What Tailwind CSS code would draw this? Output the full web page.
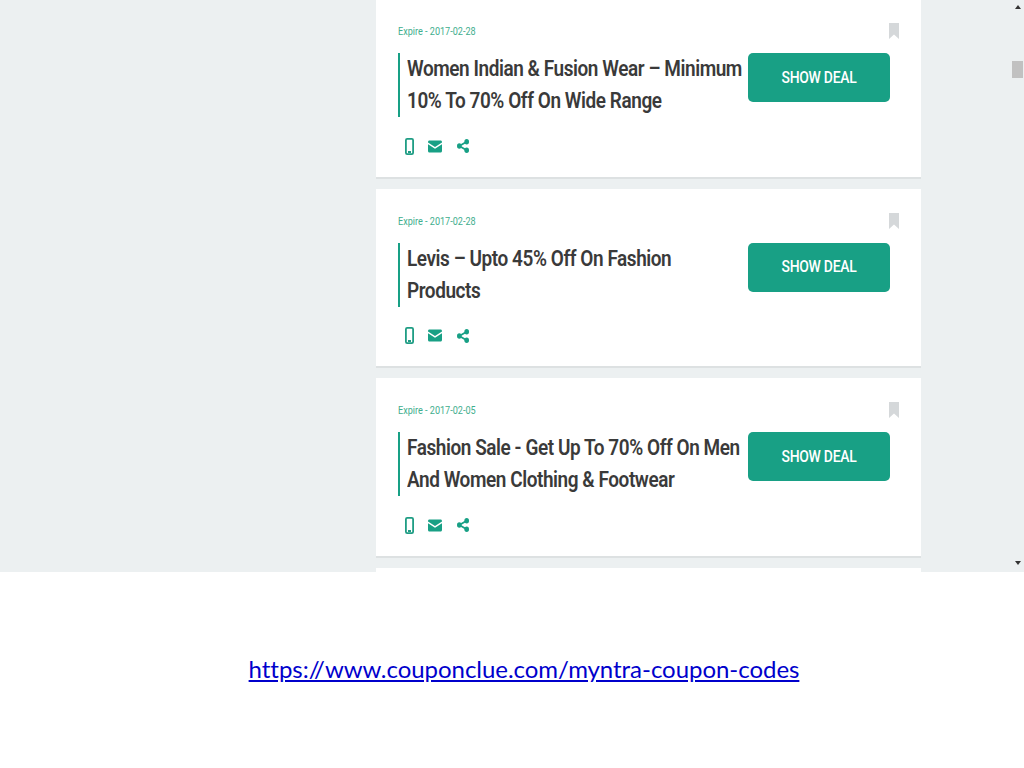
<!DOCTYPE html>
<html lang="en">

<head>
  <meta charset="UTF-8" />
  <meta name="viewport" content="width=device-width, initial-scale=1.0" />
  <script src="https://cdn.jsdelivr.net/npm/@tailwindcss/browser@4"></script>
  <title>Myntra Coupon Codes</title>
</head>

<body class="bg-white w-[1024px] h-[768px] overflow-hidden">
  <!-- page screenshot -->
  <div class="h-[572px] bg-[#ecf0f1] overflow-hidden flex relative">
    <div class="ml-[376px] w-[545px] -mt-px flex flex-col gap-[10px] font-['Roboto',sans-serif]">

      <div class="h-[179.5px] shrink-0 bg-white border-b-2 border-[#dde1e2] pl-[22px] pr-[31px] pt-[24px]">
        <div class="flex justify-between h-[30px]">
          <p class="text-[10.5px] leading-[16px] pt-px text-[#3fae8e] origin-left scale-x-[.865] whitespace-nowrap">Expire - 2017-02-28</p>
          <svg class="w-[10px] h-[16px] -mr-[9px] fill-[#d5d8da]" viewBox="0 0 10 16"><path d="M0 0h10v16L5 11.500 0 16z" /></svg>
        </div>
        <div class="flex justify-between">
          <h2 class="w-[343px] h-[64px] border-l-2 border-[#18a085] pl-[7px] text-[22px] leading-[32px] font-semibold text-[#3a3a3a] tracking-[-0.5px] whitespace-nowrap"><span class="block origin-left scale-x-[.862]">Women Indian &amp; Fusion Wear – Minimum<br />10% To 70% Off On Wide Range</span></h2>
          <button class="w-[142px] h-[49px] bg-[#18a085] rounded-[5px] text-white text-[16px] font-medium tracking-[-0.3px]"><span class="block scale-x-[.87]">SHOW DEAL</span></button>
        </div>
        <div class="flex items-center gap-[14px] pl-[7px] mt-[18px] h-[22px]">
          <svg class="w-[9px] h-[17px]" viewBox="0 0 9 17"><rect x="0.900" y="0.900" width="7.200" height="15.200" rx="1.300" fill="none" stroke="#1f9d84" stroke-width="1.800" /><rect x="3" y="13" width="3" height="2" fill="#1f9d84" /></svg>
          <svg class="w-[14px] h-[13px] fill-[#18a085]" viewBox="0 0 14 12"><path d="M0 1.500C0 .6.600 0 1.500 0h11c.9 0 1.500.6 1.500 1.500v.5L7 6.500 0 2zM0 3.800l7 4.500 7-4.500v6.700c0 .9-.6 1.500-1.500 1.500h-11C.6 12 0 11.400 0 10.500z" /></svg>
          <svg class="w-[12px] h-[14px] ml-px fill-[#18a085]" viewBox="0 0 13 13" preserveAspectRatio="none"><circle cx="10.500" cy="2.500" r="2.500" /><circle cx="2.500" cy="6.500" r="2.500" /><circle cx="10.500" cy="10.500" r="2.500" /><path d="M2 5.800 10 1.800l1 1.400-8 4zM3 5.800l8 4-1 1.400-8-4z" /></svg>
        </div>
      </div>

      <div class="h-[179.5px] shrink-0 bg-white border-b-2 border-[#dde1e2] pl-[22px] pr-[31px] pt-[24px]">
        <div class="flex justify-between h-[30px]">
          <p class="text-[10.5px] leading-[16px] pt-px text-[#3fae8e] origin-left scale-x-[.865] whitespace-nowrap">Expire - 2017-02-28</p>
          <svg class="w-[10px] h-[16px] -mr-[9px] fill-[#d5d8da]" viewBox="0 0 10 16"><path d="M0 0h10v16L5 11.500 0 16z" /></svg>
        </div>
        <div class="flex justify-between">
          <h2 class="w-[343px] h-[64px] border-l-2 border-[#18a085] pl-[7px] text-[22px] leading-[32px] font-semibold text-[#3a3a3a] tracking-[-0.5px] whitespace-nowrap"><span class="block origin-left scale-x-[.862]">Levis – Upto 45% Off On Fashion<br />Products</span></h2>
          <button class="w-[142px] h-[49px] bg-[#18a085] rounded-[5px] text-white text-[16px] font-medium tracking-[-0.3px]"><span class="block scale-x-[.87]">SHOW DEAL</span></button>
        </div>
        <div class="flex items-center gap-[14px] pl-[7px] mt-[18px] h-[22px]">
          <svg class="w-[9px] h-[17px]" viewBox="0 0 9 17"><rect x="0.900" y="0.900" width="7.200" height="15.200" rx="1.300" fill="none" stroke="#1f9d84" stroke-width="1.800" /><rect x="3" y="13" width="3" height="2" fill="#1f9d84" /></svg>
          <svg class="w-[14px] h-[13px] fill-[#18a085]" viewBox="0 0 14 12"><path d="M0 1.500C0 .6.600 0 1.500 0h11c.9 0 1.500.6 1.500 1.500v.5L7 6.500 0 2zM0 3.800l7 4.500 7-4.500v6.700c0 .9-.6 1.500-1.500 1.500h-11C.6 12 0 11.400 0 10.500z" /></svg>
          <svg class="w-[12px] h-[14px] ml-px fill-[#18a085]" viewBox="0 0 13 13" preserveAspectRatio="none"><circle cx="10.500" cy="2.500" r="2.500" /><circle cx="2.500" cy="6.500" r="2.500" /><circle cx="10.500" cy="10.500" r="2.500" /><path d="M2 5.800 10 1.800l1 1.400-8 4zM3 5.800l8 4-1 1.400-8-4z" /></svg>
        </div>
      </div>

      <div class="h-[179.5px] shrink-0 bg-white border-b-2 border-[#dde1e2] pl-[22px] pr-[31px] pt-[24px]">
        <div class="flex justify-between h-[30px]">
          <p class="text-[10.5px] leading-[16px] pt-px text-[#3fae8e] origin-left scale-x-[.865] whitespace-nowrap">Expire - 2017-02-05</p>
          <svg class="w-[10px] h-[16px] -mr-[9px] fill-[#d5d8da]" viewBox="0 0 10 16"><path d="M0 0h10v16L5 11.500 0 16z" /></svg>
        </div>
        <div class="flex justify-between">
          <h2 class="w-[343px] h-[64px] border-l-2 border-[#18a085] pl-[7px] text-[22px] leading-[32px] font-semibold text-[#3a3a3a] tracking-[-0.5px] whitespace-nowrap"><span class="block origin-left scale-x-[.862]">Fashion Sale - Get Up To 70% Off On Men<br />And Women Clothing &amp; Footwear</span></h2>
          <button class="w-[142px] h-[49px] bg-[#18a085] rounded-[5px] text-white text-[16px] font-medium tracking-[-0.3px]"><span class="block scale-x-[.87]">SHOW DEAL</span></button>
        </div>
        <div class="flex items-center gap-[14px] pl-[7px] mt-[18px] h-[22px]">
          <svg class="w-[9px] h-[17px]" viewBox="0 0 9 17"><rect x="0.900" y="0.900" width="7.200" height="15.200" rx="1.300" fill="none" stroke="#1f9d84" stroke-width="1.800" /><rect x="3" y="13" width="3" height="2" fill="#1f9d84" /></svg>
          <svg class="w-[14px] h-[13px] fill-[#18a085]" viewBox="0 0 14 12"><path d="M0 1.500C0 .6.600 0 1.500 0h11c.9 0 1.500.6 1.500 1.500v.5L7 6.500 0 2zM0 3.800l7 4.500 7-4.500v6.700c0 .9-.6 1.500-1.500 1.500h-11C.6 12 0 11.400 0 10.500z" /></svg>
          <svg class="w-[12px] h-[14px] ml-px fill-[#18a085]" viewBox="0 0 13 13" preserveAspectRatio="none"><circle cx="10.500" cy="2.500" r="2.500" /><circle cx="2.500" cy="6.500" r="2.500" /><circle cx="10.500" cy="10.500" r="2.500" /><path d="M2 5.800 10 1.800l1 1.400-8 4zM3 5.800l8 4-1 1.400-8-4z" /></svg>
        </div>
      </div>

      <div class="h-[179px] shrink-0 bg-white"></div>
    </div>

    <!-- scrollbar -->
    <div class="absolute top-0 right-0 w-[17px] h-full">
      <div class="absolute top-[5px] left-[8px] w-0 h-0 border-x-[3px] border-x-transparent border-b-[4px] border-b-[#333]"></div>
      <div class="absolute top-[61px] left-[5px] w-[11px] h-[17px] bg-[#c1c1c1]"></div>
      <div class="absolute top-[561px] left-[8px] w-0 h-0 border-x-[3px] border-x-transparent border-t-[4px] border-t-[#333]"></div>
    </div>
  </div>

  <div class="h-[196px] flex justify-center pt-[81px] pl-[24px]">
    <a href="#" class="font-['Lato','Liberation_Sans',sans-serif] text-[24px] leading-[32px] tracking-[-0.04px] text-[#0000cc] underline">https://www.couponclue.com/myntra-coupon-codes</a>
  </div>
</body>

</html>
